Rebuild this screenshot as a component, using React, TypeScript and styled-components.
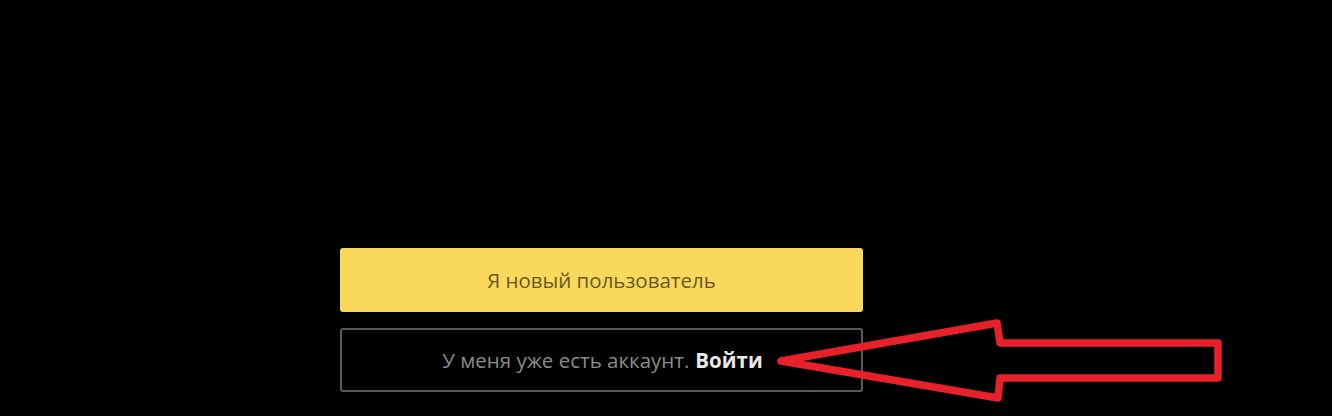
import React from "react";
import styled, { createGlobalStyle } from "styled-components";

const Global = createGlobalStyle`
  html, body { margin: 0; padding: 0; background: #000; }
  body { font-family: "Open Sans", "Noto Sans", sans-serif; }
`;

const Page = styled.div`
  position: relative;
  width: 1332px;
  height: 416px;
  background: #000;
  overflow: hidden;
  display: flex;
  flex-direction: column;
  justify-content: flex-end;
  padding: 0 0 24px 340px;
  box-sizing: border-box;
`;

const Stack = styled.div`
  width: 523px;
  display: flex;
  flex-direction: column;
  gap: 16px;
`;

const Button = styled.div<{ $variant: "primary" | "outline" }>`
  height: 64px;
  box-sizing: border-box;
  display: flex;
  align-items: center;
  justify-content: center;
  border-radius: 3px;
  font-size: 20.5px;
  background: ${(p) => (p.$variant === "primary" ? "#f9d85c" : "#000")};
  color: ${(p) => (p.$variant === "primary" ? "#68581f" : "#8b8b8b")};
  border: ${(p) => (p.$variant === "primary" ? "none" : "2px solid #5a5a5a")};
  padding-left: ${(p) => (p.$variant === "primary" ? "0" : "2px")};
`;

const Strong = styled.b`
  color: #e8e8e8;
  font-weight: 700;
  margin-left: 6px;
`;

const Arrow = styled.svg`
  position: absolute;
  left: 0;
  top: 0;
  pointer-events: none;
`;

export default function App() {
  return (
    <>
      <Global />
      <Page>
        <Stack>
          <Button $variant="primary">Я новый пользователь</Button>
          <Button $variant="outline">
            У меня уже есть аккаунт.<Strong>Войти</Strong>
          </Button>
        </Stack>
        <Arrow width="1332" height="416" viewBox="0 0 1332 416">
          <polygon
            points="781,361 997,323 1000,343 1218,343 1218,378 1000,378 998,398"
            fill="none"
            stroke="#e8202a"
            strokeWidth="7.5"
            strokeLinejoin="round"
          />
        </Arrow>
      </Page>
    </>
  );
}
